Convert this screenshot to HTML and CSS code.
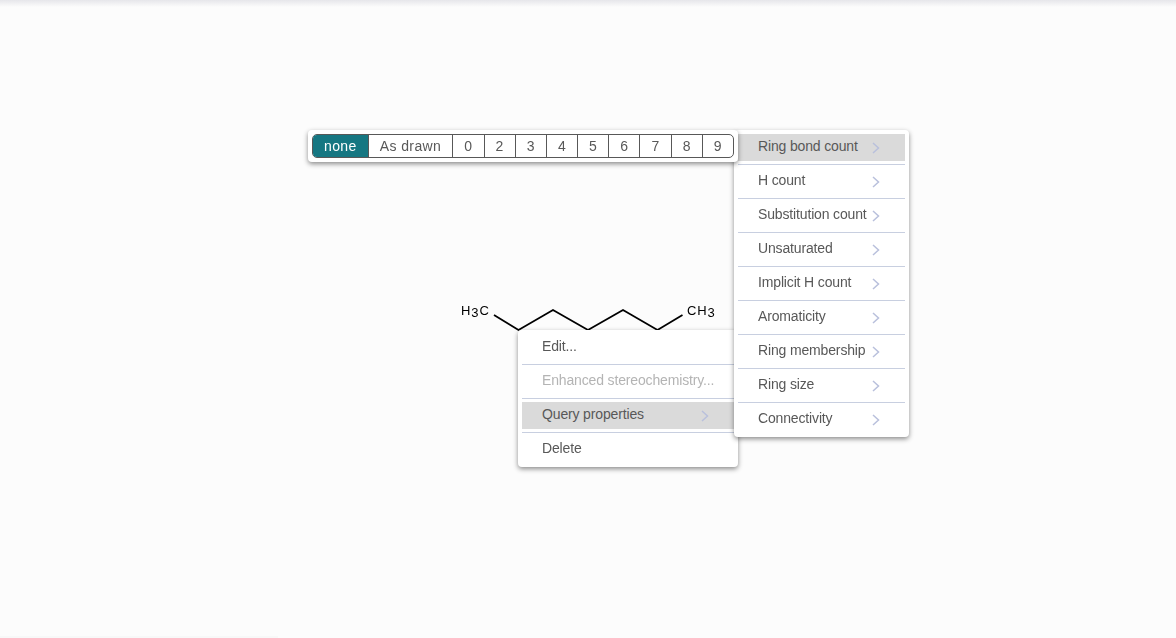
FILE: index.html
```html
<!DOCTYPE html>
<html lang="en">
<head>
  <meta charset="UTF-8">
  <meta name="viewport" content="width=device-width, initial-scale=1.0">
  <title>Query properties</title>
  <link rel="stylesheet" href="styles.css">
</head>
<body>
  <div class="top-shade"></div>

  <svg class="molecule" width="1176" height="638" viewBox="0 0 1176 638">
    <polyline class="bond" points="494,315 518.5,330 553,310 588,330 623,310 657.5,330 682.5,315"/>
    <text class="atom" x="461" y="315">H<tspan class="sub" dy="2">3</tspan><tspan dy="-2">C</tspan></text>
    <text class="atom" x="687" y="315">CH<tspan class="sub" dy="2">3</tspan></text>
  </svg>

  <div class="toolbar">
    <div class="btn-group">
      <span class="btn active">none</span>
      <span class="btn">As drawn</span>
      <span class="btn">0</span>
      <span class="btn">2</span>
      <span class="btn">3</span>
      <span class="btn">4</span>
      <span class="btn">5</span>
      <span class="btn">6</span>
      <span class="btn">7</span>
      <span class="btn">8</span>
      <span class="btn">9</span>
    </div>
  </div>

  <ul class="menu main-menu">
    <li class="item">Edit...</li>
    <li class="item disabled">Enhanced stereochemistry...</li>
    <li class="item hover">Query properties <svg class="arrow" width="8" height="12" viewBox="0 0 8 12"><path d="M1 1l5.5 5-5.5 5"/></svg></li>
    <li class="item">Delete</li>
  </ul>

  <ul class="menu sub-menu">
    <li class="item hover">Ring bond count <svg class="arrow" width="8" height="12" viewBox="0 0 8 12"><path d="M1 1l5.5 5-5.5 5"/></svg></li>
    <li class="item">H count <svg class="arrow" width="8" height="12" viewBox="0 0 8 12"><path d="M1 1l5.5 5-5.5 5"/></svg></li>
    <li class="item">Substitution count <svg class="arrow" width="8" height="12" viewBox="0 0 8 12"><path d="M1 1l5.5 5-5.5 5"/></svg></li>
    <li class="item">Unsaturated <svg class="arrow" width="8" height="12" viewBox="0 0 8 12"><path d="M1 1l5.5 5-5.5 5"/></svg></li>
    <li class="item">Implicit H count <svg class="arrow" width="8" height="12" viewBox="0 0 8 12"><path d="M1 1l5.5 5-5.5 5"/></svg></li>
    <li class="item">Aromaticity <svg class="arrow" width="8" height="12" viewBox="0 0 8 12"><path d="M1 1l5.5 5-5.5 5"/></svg></li>
    <li class="item">Ring membership <svg class="arrow" width="8" height="12" viewBox="0 0 8 12"><path d="M1 1l5.5 5-5.5 5"/></svg></li>
    <li class="item">Ring size <svg class="arrow" width="8" height="12" viewBox="0 0 8 12"><path d="M1 1l5.5 5-5.5 5"/></svg></li>
    <li class="item">Connectivity <svg class="arrow" width="8" height="12" viewBox="0 0 8 12"><path d="M1 1l5.5 5-5.5 5"/></svg></li>
  </ul>

  <div class="bottom-line"></div>
</body>
</html>
```

FILE: styles.css
```css
html, body {
  height: 100%;
}
body {
  margin: 0;
  background: #fcfcfc;
  color: #585858;
  font-family: "Liberation Sans", Arial, sans-serif;
  font-size: 14px;
  overflow: hidden;
  position: relative;
}

.top-shade {
  height: 7px;
  background: linear-gradient(#e6e6ea, #fcfcfc);
}
.bottom-line {
  position: absolute;
  left: 0;
  bottom: 0;
  width: 278px;
  height: 2px;
  background: #f8f8f8;
}

/* molecule canvas */
.molecule {
  position: absolute;
  top: 0;
  left: 0;
  will-change: opacity;
}
.bond {
  fill: none;
  stroke: #000;
  stroke-width: 1.8;
}
.atom {
  font-size: 13px;
  letter-spacing: 0.9px;
  fill: #000;
}
.sub {
  font-size: 13px;
}

/* floating panels */
.toolbar, .menu {
  position: absolute;
  background: #fff;
  border-radius: 4px;
  box-shadow: 0 2px 5px rgba(0, 0, 0, 0.45);
  will-change: opacity;
}
.toolbar {
  top: 130px;
  left: 308px;
  width: 422px;
  padding: 4px;
  z-index: 3;
}
.btn-group {
  display: flex;
  height: 24px;
  box-sizing: border-box;
  border: 1px solid #585858;
  border-radius: 5px;
  overflow: hidden;
}
.btn {
  flex: auto;
  text-align: center;
  line-height: 22px;
  letter-spacing: 0.4px;
  border-left: 1px solid #585858;
}
.btn:first-child {
  border-left: none;
}
.btn.active {
  background: #167782;
  color: #fff;
}

.menu {
  margin: 0;
  padding: 4px;
  list-style: none;
}
.main-menu {
  top: 330px;
  left: 518px;
  width: 212px;
  z-index: 1;
}
.sub-menu {
  top: 130px;
  left: 734px;
  width: 167px;
  z-index: 2;
}
.item {
  height: 27px;
  line-height: 24px;
  padding-left: 20px;
  margin-bottom: 7px;
  letter-spacing: -0.15px;
  position: relative;
  white-space: nowrap;
}
.item::after {
  content: "";
  position: absolute;
  left: 0;
  right: 0;
  bottom: -4px;
  border-bottom: 1px solid #c8cfe0;
}
.item:last-child {
  margin-bottom: 0;
}
.item:last-child::after {
  display: none;
}
.item.hover {
  background: #dadada;
}
.item.disabled {
  color: #b4b4b4;
}
.arrow {
  position: absolute;
  right: 25px;
  top: 8px;
  fill: none;
  stroke: #b9c0dc;
  stroke-width: 1.5;
}
```
